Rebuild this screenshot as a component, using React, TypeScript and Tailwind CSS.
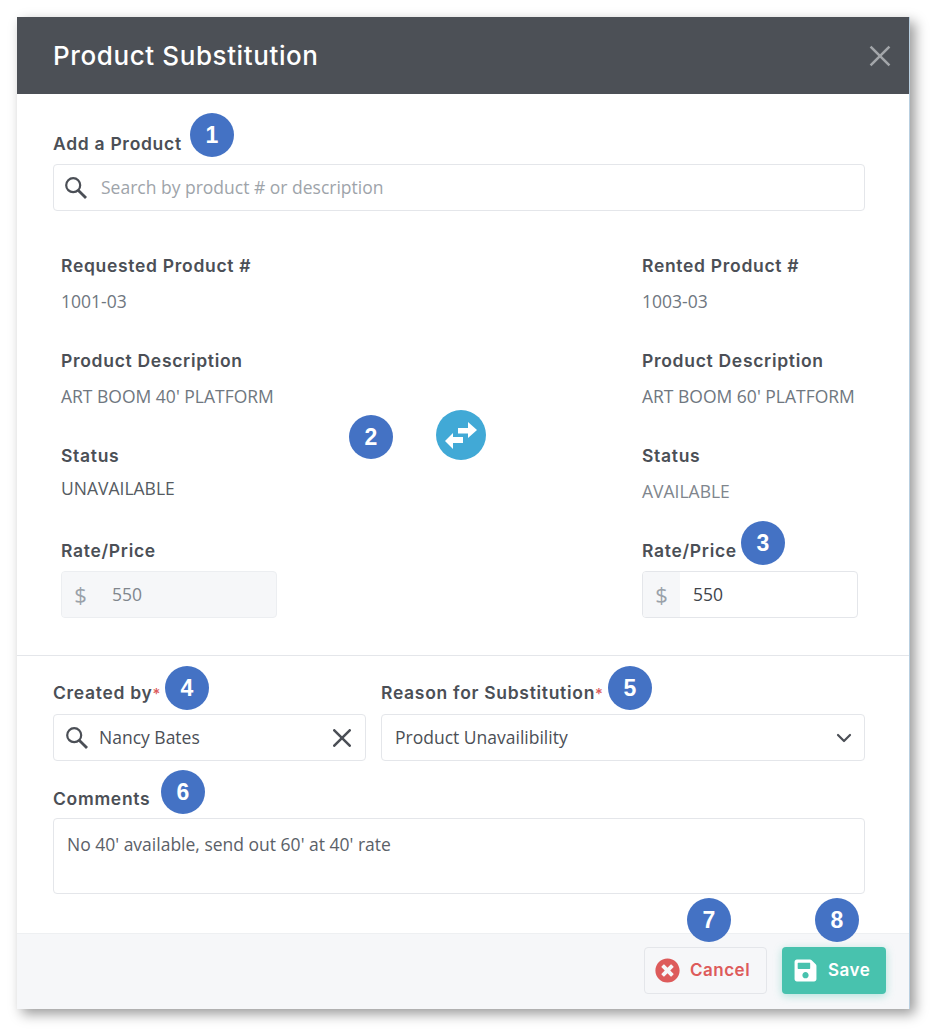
import { X, ChevronDown } from "lucide-react";
import { FaSave, FaTimesCircle } from "react-icons/fa";

const heading = "h-5 font-['Inter',sans-serif] font-semibold text-[17.5px] leading-5 text-[#4b4f56] tracking-[0.7px]";
const value = "text-[17.5px] leading-5 text-[#6f7780]";

function Badge({ n, className }: { n: number; className: string }) {
  return (
    <div
      className={`absolute flex h-[44px] w-[44px] items-center justify-center rounded-full bg-[#4472c4] font-['Liberation_Sans',sans-serif] text-[23px] font-bold text-white ${className}`}
    >
      {n}
    </div>
  );
}

function SearchIcon({ className }: { className?: string }) {
  return (
    <svg viewBox="0 0 22 22" className={`h-[22px] w-[22px] shrink-0 ${className ?? ""}`} fill="none" stroke="currentColor">
      <circle cx="8.2" cy="8.2" r="7" strokeWidth="2.2" />
      <path d="M13.2 13.2L21 21" strokeWidth="2.8" />
    </svg>
  );
}

function SwapIcon() {
  return (
    <svg viewBox="0 0 50 50" className="h-[50px] w-[50px]" fill="currentColor">
      <path d="M22 18H32V12L41 20L32 28V23.5H22Z" />
      <path d="M9 31L17 23V27H27V33H17V39Z" />
    </svg>
  );
}

function PriceInput({ disabled }: { disabled?: boolean }) {
  return (
    <div
      className={`flex h-[47px] w-[216px] overflow-hidden rounded border ${
        disabled ? "border-[#eceef1] bg-[#f6f7f9]" : "border-[#e4e6ea] bg-white"
      }`}
    >
      <div className="flex w-[37px] items-center justify-center bg-[#f6f7f9] text-[22px] text-[#9aa1a9]">$</div>
      <div className={`flex items-center pl-[13px] text-[17.5px] ${disabled ? "text-[#80868d]" : "text-[#3f444b]"}`}>550</div>
    </div>
  );
}

function ProductColumn(props: { numLabel: string; num: string; desc: string; status: string; statusClass: string; statusGap: string; disabled?: boolean }) {
  return (
    <div className="w-[216px]">
      <div className={`whitespace-nowrap ${heading}`}>{props.numLabel}</div>
      <div className={`mt-[15px] ${value}`}>{props.num}</div>
      <div className={`mt-[40px] whitespace-nowrap ${heading}`}>Product Description</div>
      <div className={`mt-[15px] whitespace-nowrap ${value}`}>{props.desc}</div>
      <div className={`mt-[40px] ${heading}`}>Status</div>
      <div className={`${props.statusGap} text-[17.5px] leading-5 ${props.statusClass}`}>{props.status}</div>
      <div className={`${props.disabled ? "mt-[43px]" : "mt-[40px]"} ${heading}`}>Rate/Price</div>
      <div className="mt-[10px]">
        <PriceInput disabled={props.disabled} />
      </div>
    </div>
  );
}

export default function App() {
  return (
    <div className="min-h-[1035px] bg-white p-[17px] font-['Open_Sans',sans-serif]">
      <div className="relative h-[992px] w-[893px] border-r border-[#b9cfe0] bg-white shadow-[5px_5px_12px_rgba(0,0,0,0.4)]">
        {/* Header */}
        <div className="flex h-[77px] items-center justify-between bg-[#4c5056] pl-[36px] pr-[18px]">
          <h1 className="font-['Inter',sans-serif] text-[26px] font-medium tracking-[0.6px] text-white">Product Substitution</h1>
          <X viewBox="5 5 14 14" className="h-[22px] w-[22px] text-[#a3a6aa]" strokeWidth={1.6} strokeLinecap="butt" />
        </div>

        {/* Add a product */}
        <div className="pl-[36px] pr-[44px] pt-[40px]">
          <div className={heading}>Add a Product</div>
          <div className="mt-[10px] flex h-[47px] items-center rounded border border-[#e4e6ea] pl-[11px]">
            <SearchIcon className="text-[#4b4f56]" />
            <span className="ml-[14px] text-[17.5px] text-[#9ea4aa]">Search by product # or description</span>
          </div>
        </div>

        {/* Products */}
        <div className="mt-[45px] flex justify-between pb-[37px] pl-[44px] pr-[51px]">
          <ProductColumn
            numLabel="Requested Product #"
            num="1001-03"
            desc="ART BOOM 40' PLATFORM"
            status="UNAVAILABLE"
            statusClass="text-[#555b62]"
            statusGap="mt-[12px]"
            disabled
          />
          <div className="flex items-center pb-[5px] pl-[3px]">
            <div className="flex h-[50px] w-[50px] items-center justify-center rounded-full bg-[#41a9d6] text-white">
              <SwapIcon />
            </div>
          </div>
          <ProductColumn
            numLabel="Rented Product #"
            num="1003-03"
            desc="ART BOOM 60' PLATFORM"
            status="AVAILABLE"
            statusClass="text-[#80868d]"
            statusGap="mt-[15px]"
          />
        </div>

        <div className="h-px bg-[#e4e6ea]" />

        {/* Details */}
        <div className="pl-[36px] pr-[44px] pt-[27px]">
          <div className="flex gap-[15px]">
            <div className="w-[313px]">
              <div className={heading}>
                Created by<span className="text-[15px] font-medium text-[#dc5c5c]">*</span>
              </div>
              <div className="mt-[11px] flex h-[47px] items-center rounded border border-[#e4e6ea] pl-[12px] pr-[14px] text-[17.5px] text-[#4b4f56]">
                <SearchIcon />
                <span className="ml-[11px] flex-1">Nancy Bates</span>
                <X viewBox="5 5 14 14" className="h-[18px] w-[18px]" strokeWidth={2} />
              </div>
            </div>
            <div className="flex-1">
              <div className={`whitespace-nowrap ${heading}`}>
                Reason for Substitution<span className="text-[15px] font-medium text-[#dc5c5c]">*</span>
              </div>
              <div className="mt-[11px] flex h-[47px] items-center justify-between rounded border border-[#e4e6ea] pl-[13px] pr-[13px] text-[17.5px] text-[#4b4f56]">
                <span>Product Unavailibility</span>
                <ChevronDown viewBox="5 8 14 8" className="h-[8px] w-[14px]" strokeWidth={2.2} overflow="visible" />
              </div>
            </div>
          </div>
          <div className={`mt-[28px] ${heading}`}>Comments</div>
          <div className="mt-[9px] h-[76px] rounded border border-[#e4e6ea] px-[13px] pt-[15px] text-[17.5px] leading-5 text-[#5b6168]">
            No 40' available, send out 60' at 40' rate
          </div>
        </div>

        {/* Footer */}
        <div className="mt-[39px] flex h-[76px] justify-end gap-[15px] border-t border-[#eef0f2] bg-[#f6f7f9] pr-[23px] pt-[13px]">
          <button className="flex h-[47px] w-[123px] items-center rounded border border-[#e4e6ea] pl-[10px] font-['Inter',sans-serif] text-[17px] font-semibold tracking-[0.5px] text-[#dd5b5b]">
            <FaTimesCircle className="h-[25px] w-[25px]" />
            <span className="ml-[10px]">Cancel</span>
          </button>
          <button className="flex h-[47px] w-[104px] items-center rounded bg-[#48c2ae] pl-[11px] font-['Inter',sans-serif] text-[17px] font-semibold tracking-[0.5px] text-white shadow-[0_2px_8px_rgba(72,194,174,0.4)]">
            <FaSave className="h-[25px] w-[25px]" />
            <span className="ml-[10px]">Save</span>
          </button>
        </div>

        {/* Callout markers */}
        <Badge n={1} className="left-[173px] top-[96px]" />
        <Badge n={2} className="left-[332px] top-[398px]" />
        <Badge n={3} className="left-[724px] top-[504px]" />
        <Badge n={4} className="left-[148px] top-[649px]" />
        <Badge n={5} className="left-[591px] top-[649px]" />
        <Badge n={6} className="left-[144px] top-[753px]" />
        <Badge n={7} className="left-[670px] top-[881px]" />
        <Badge n={8} className="left-[798px] top-[881px]" />
      </div>
    </div>
  );
}
